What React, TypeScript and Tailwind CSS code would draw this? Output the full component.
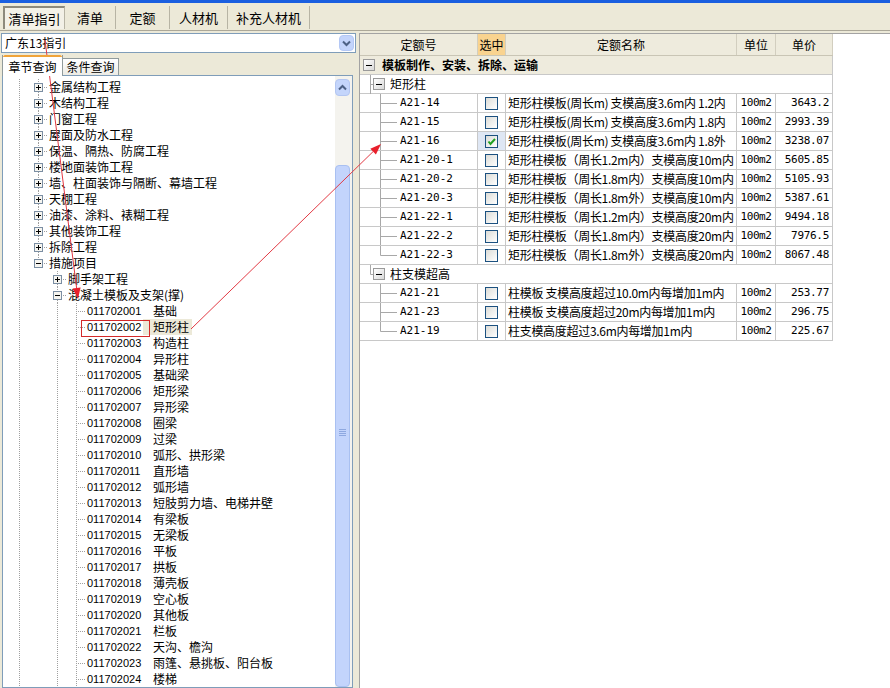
import React from "react";

const level1 = [
  "金属结构工程",
  "木结构工程",
  "门窗工程",
  "屋面及防水工程",
  "保温、隔热、防腐工程",
  "楼地面装饰工程",
  "墙、柱面装饰与隔断、幕墙工程",
  "天棚工程",
  "油漆、涂料、裱糊工程",
  "其他装饰工程",
  "拆除工程",
];

const leaves = [
  ["011702001", "基础"],
  ["011702002", "矩形柱"],
  ["011702003", "构造柱"],
  ["011702004", "异形柱"],
  ["011702005", "基础梁"],
  ["011702006", "矩形梁"],
  ["011702007", "异形梁"],
  ["011702008", "圈梁"],
  ["011702009", "过梁"],
  ["011702010", "弧形、拱形梁"],
  ["011702011", "直形墙"],
  ["011702012", "弧形墙"],
  ["011702013", "短肢剪力墙、电梯井壁"],
  ["011702014", "有梁板"],
  ["011702015", "无梁板"],
  ["011702016", "平板"],
  ["011702017", "拱板"],
  ["011702018", "薄壳板"],
  ["011702019", "空心板"],
  ["011702020", "其他板"],
  ["011702021", "栏板"],
  ["011702022", "天沟、檐沟"],
  ["011702023", "雨篷、悬挑板、阳台板"],
  ["011702024", "楼梯"],
];

type Quota = { code: string; name: string; price: string; checked?: boolean; last?: boolean };

const groups: { title: string; rows: Quota[] }[] = [
  {
    title: "矩形柱",
    rows: [
      { code: "A21-14", name: "矩形柱模板(周长m) 支模高度3.6m内 1.2内", price: "3643.2" },
      { code: "A21-15", name: "矩形柱模板(周长m) 支模高度3.6m内 1.8内", price: "2993.39" },
      { code: "A21-16", name: "矩形柱模板(周长m) 支模高度3.6m内 1.8外", price: "3238.07", checked: true },
      { code: "A21-20-1", name: "矩形柱模板（周长1.2m内）支模高度10m内", price: "5605.85" },
      { code: "A21-20-2", name: "矩形柱模板（周长1.8m内）支模高度10m内", price: "5105.93" },
      { code: "A21-20-3", name: "矩形柱模板（周长1.8m外）支模高度10m内", price: "5387.61" },
      { code: "A21-22-1", name: "矩形柱模板（周长1.2m内）支模高度20m内", price: "9494.18" },
      { code: "A21-22-2", name: "矩形柱模板（周长1.8m内）支模高度20m内", price: "7976.5" },
      { code: "A21-22-3", name: "矩形柱模板（周长1.8m外）支模高度20m内", price: "8067.48", last: true },
    ],
  },
  {
    title: "柱支模超高",
    rows: [
      { code: "A21-21", name: "柱模板 支模高度超过10.0m内每增加1m内", price: "253.77" },
      { code: "A21-23", name: "柱模板 支模高度超过20m内每增加1m内", price: "296.75" },
      { code: "A21-19", name: "柱支模高度超过3.6m内每增加1m内", price: "225.67", last: true },
    ],
  },
];

const dot = { stroke: "#a0a0a0", strokeDasharray: "1 1" };

// one 19px indent cell of the left tree
function Guide({ kind, open = false, up = true, down = true }: { kind: "none" | "line" | "tee" | "box"; open?: boolean; up?: boolean; down?: boolean }) {
  return (
    <svg width="19" height="16" className="block shrink-0">
      {kind === "line" && <line x1="9.5" y1="0" x2="9.5" y2="16" {...dot} />}
      {kind === "tee" && (
        <>
          <line x1="9.5" y1="0" x2="9.5" y2="16" {...dot} />
          <line x1="11" y1="8.5" x2="19" y2="8.5" {...dot} />
        </>
      )}
      {kind === "box" && (
        <>
          {up && <line x1="9.5" y1="0" x2="9.5" y2="4" {...dot} />}
          {down && <line x1="9.5" y1="13" x2="9.5" y2="16" {...dot} />}
          <line x1="15" y1="8.5" x2="19" y2="8.5" {...dot} />
          <rect x="5.5" y="4.5" width="8" height="8" fill="#f6f5f0" stroke="#7b8ea3" />
          <line x1="7" y1="8.5" x2="12" y2="8.5" stroke="#000" />
          {!open && <line x1="9.5" y1="6" x2="9.5" y2="11" stroke="#000" />}
        </>
      )}
    </svg>
  );
}

function MinusBox() {
  return (
    <span className="flex h-[12px] w-[12px] shrink-0 items-center justify-center border border-[#9a9a9a] bg-gradient-to-br from-white to-[#d9d9d9]">
      <span className="h-px w-[6px] bg-black" />
    </span>
  );
}

function CheckBox({ checked }: { checked?: boolean }) {
  return (
    <span className="flex h-[13px] w-[13px] items-center justify-center border border-[#1c5180] bg-gradient-to-br from-[#dcdcd7] to-white">
      {checked && (
        <svg width="11" height="11">
          <polyline points="2.5,5.5 4.5,8 9,3" fill="none" stroke="#21a121" strokeWidth="2" />
        </svg>
      )}
    </span>
  );
}

const tabs = ["清单指引", "清单", "定额", "人材机", "补充人材机"];
const tabW = ["w-[62px]", "w-[51px]", "w-[54px]", "w-[58px]", "w-[82px]"];

export default function App() {
  return (
    <div className="relative h-[688px] w-[890px] overflow-hidden bg-[#ece9d8] font-['Noto_Sans_CJK_SC',sans-serif] text-[12px] leading-4 text-black">
      {/* window strip */}
      <div className="h-[3px] bg-[#1a5fe0]" />

      {/* top tabs */}
      <div className="flex h-[28px] items-start border-b border-[#aca899] pl-[3px] pt-[3px]">
        {tabs.map((t, i) => (
          <div
            key={t}
            className={`flex h-[23px] items-center justify-center border-r border-[#b7b4a4] text-[13px] ${tabW[i]} ${
              i === 0 ? "border-l-2 border-t-2 border-l-[#8d8a7c] border-t-[#8d8a7c] bg-[#f3f1e7]" : ""
            }`}
          >
            {t}
          </div>
        ))}
      </div>

      <div className="flex h-[657px]">
        {/* left side */}
        <div className="flex w-[358px] shrink-0 flex-col pt-[2px]">
          <div className="ml-px flex h-5 w-[355px] items-center border border-[#7f9db9] bg-white pl-[3px]">
            <span>广东13指引</span>
            <span className="ml-auto mr-px flex h-4 w-[15px] items-center justify-center rounded-sm border border-[#b4c8f5] bg-[#c3d4fb]">
              <svg width="9" height="7">
                <polyline points="1,1.5 4.5,5 8,1.5" fill="none" stroke="#4d6185" strokeWidth="2" />
              </svg>
            </span>
          </div>

          <div className="flex h-[22px] items-end pl-[2px]">
            <div className="relative z-10 -mb-px flex h-[21px] w-[61px] flex-col border-x border-[#919b9c] bg-white">
              <div className="h-[2px] rounded-t-sm bg-[#f0a43a]" />
              <div className="flex flex-1 items-center justify-center">章节查询</div>
            </div>
            <div className="flex h-[17px] w-[56px] items-center justify-center border-r border-t border-[#919b9c] bg-gradient-to-b from-white to-[#ecebe5]">
              条件查询
            </div>
          </div>

          <div className="ml-[2px] flex min-h-0 w-[351px] flex-1 border border-[#7f9db9] bg-white">
            <div className="min-w-0 flex-1 overflow-hidden pl-[7px] pt-[3px]">
              {level1.map((t) => (
                <div key={t} className="flex h-4 items-center whitespace-nowrap">
                  <Guide kind="line" />
                  <Guide kind="box" />
                  <span className="ml-px">{t}</span>
                </div>
              ))}
              <div className="flex h-4 items-center whitespace-nowrap">
                <Guide kind="line" />
                <Guide kind="box" open down={false} />
                <span className="ml-px">措施项目</span>
              </div>
              <div className="flex h-4 items-center whitespace-nowrap">
                <Guide kind="line" />
                <Guide kind="none" />
                <Guide kind="box" />
                <span className="ml-px">脚手架工程</span>
              </div>
              <div className="flex h-4 items-center whitespace-nowrap">
                <Guide kind="line" />
                <Guide kind="none" />
                <Guide kind="box" open />
                <span className="ml-px">混凝土模板及支架(撑)</span>
              </div>
              {leaves.map(([code, name]) => {
                const sel = code === "011702002";
                return (
                  <div key={code} className="relative flex h-4 items-center whitespace-nowrap">
                    <Guide kind="line" />
                    <Guide kind="none" />
                    <Guide kind="line" />
                    <Guide kind="tee" />
                    <span className="ml-px w-[56px] font-['Liberation_Sans',sans-serif] text-[11px]">{code}</span>
                    <span className={`pl-[10px] pr-[3px] ${sel ? "bg-[#ece9d8]" : ""}`}>{name}</span>
                    {sel && <div className="absolute left-[71px] top-px h-[17px] w-[69px] border border-[#d42a2a]" />}
                  </div>
                );
              })}
            </div>

            {/* scrollbar */}
            <div className="flex w-[17px] shrink-0 flex-col bg-[#f4f3ee] pt-[3px]">
              <div className="flex h-[17px] w-[15px] items-center justify-center rounded-sm border border-[#b3c6f1] bg-[#c4d5fb]">
                <svg width="9" height="7">
                  <polyline points="1,5.5 4.5,2 8,5.5" fill="none" stroke="#4d6185" strokeWidth="2" />
                </svg>
              </div>
              <div className="h-[69px]" />
              <div className="flex w-[15px] flex-1 justify-center rounded-sm border border-[#a9c0f1] bg-[#c3d4fc]">
                <div className="mt-[263px] flex flex-col gap-px">
                  <div className="h-px w-[7px] bg-[#8ea8e0]" />
                  <div className="h-px w-[7px] bg-[#8ea8e0]" />
                  <div className="h-px w-[7px] bg-[#8ea8e0]" />
                  <div className="h-px w-[7px] bg-[#8ea8e0]" />
                </div>
              </div>
            </div>
          </div>
        </div>

        {/* right side */}
        <div className="ml-px mt-[2px] flex-1 border-l border-t border-[#a3a3a3] bg-white">
          <div className="flex h-[22px] w-[473px] border-b border-[#c9c5b5] bg-[#eeebdd]">
            <div className="flex w-[118px] items-center justify-center border-r border-[#d2cebf]">定额号</div>
            <div className="flex w-[28px] items-center justify-center border-r border-[#d2cebf] bg-[#f9d38f]">选中</div>
            <div className="flex w-[231px] items-center justify-center border-r border-[#d2cebf]">定额名称</div>
            <div className="flex w-[39px] items-center justify-center border-r border-[#d2cebf]">单位</div>
            <div className="flex w-[57px] items-center justify-center border-r border-[#d2cebf]">单价</div>
          </div>

          <div className="flex h-[19px] w-[473px] items-center gap-[7px] border-b border-r border-[#c8c8c8] bg-[#eeebdd] pl-[3px] font-bold">
            <MinusBox />
            <span>模板制作、安装、拆除、运输</span>
          </div>

          {groups.map((g, gi) => (
            <React.Fragment key={g.title}>
              <div className="flex h-[19px] w-[473px] items-center border-b border-r border-[#c8c8c8]">
                <svg width="13" height="19" className="block shrink-0">
                  <line x1="10.5" y1="0" x2="10.5" y2={gi === 0 ? 19 : 9.5} stroke="#a8a8a8" />
                  <line x1="10.5" y1="9.5" x2="13" y2="9.5" stroke="#a8a8a8" />
                </svg>
                <MinusBox />
                <span className="ml-[5px]">{g.title}</span>
              </div>
              {g.rows.map((r) => (
                <div key={r.code} className="flex h-[19px] w-[473px] border-b border-[#c8c8c8]">
                  <div className="flex w-[118px] items-center border-r border-[#c8c8c8]">
                    <svg width="40" height="18" className="block shrink-0">
                      <line x1="20.5" y1="0" x2="20.5" y2={r.last ? 9.5 : 18} stroke="#a8a8a8" />
                      <line x1="20.5" y1="9.5" x2="37" y2="9.5" stroke="#a8a8a8" />
                    </svg>
                    <span className="font-['DejaVu_Sans_Mono',monospace] text-[11px]">{r.code}</span>
                  </div>
                  <div className={`flex w-[28px] items-center justify-center border-r border-[#c8c8c8] ${r.checked ? "bg-[#dfe7f4]" : ""}`}>
                    <CheckBox checked={r.checked} />
                  </div>
                  <div className="flex w-[231px] items-center overflow-hidden whitespace-nowrap border-r border-[#c8c8c8] pl-[2px] tracking-[-0.3px]">
                    {r.name}
                  </div>
                  <div className="flex w-[39px] items-center justify-center border-r border-[#c8c8c8] font-['DejaVu_Sans_Mono',monospace] text-[11px] tracking-[-0.4px]">
                    100m2
                  </div>
                  <div className="flex w-[57px] items-center justify-end border-r border-[#c8c8c8] pr-[3px] font-['DejaVu_Sans_Mono',monospace] text-[11px] tracking-[-0.3px]">
                    {r.price}
                  </div>
                </div>
              ))}
            </React.Fragment>
          ))}
        </div>
      </div>

      {/* red annotation arrows */}
      <svg width="890" height="688" className="pointer-events-none absolute left-0 top-0">
        <line x1="45" y1="40" x2="76.6" y2="288" stroke="#e23a44" strokeWidth="1" />
        <polygon points="78,299 72.6,288.6 80.6,287.6" fill="#e8202c" />
        <line x1="191" y1="329" x2="373" y2="151.7" stroke="#e23a44" strokeWidth="1" />
        <polygon points="381,144 375.9,154.5 370.3,148.8" fill="#e8202c" />
      </svg>
    </div>
  );
}
